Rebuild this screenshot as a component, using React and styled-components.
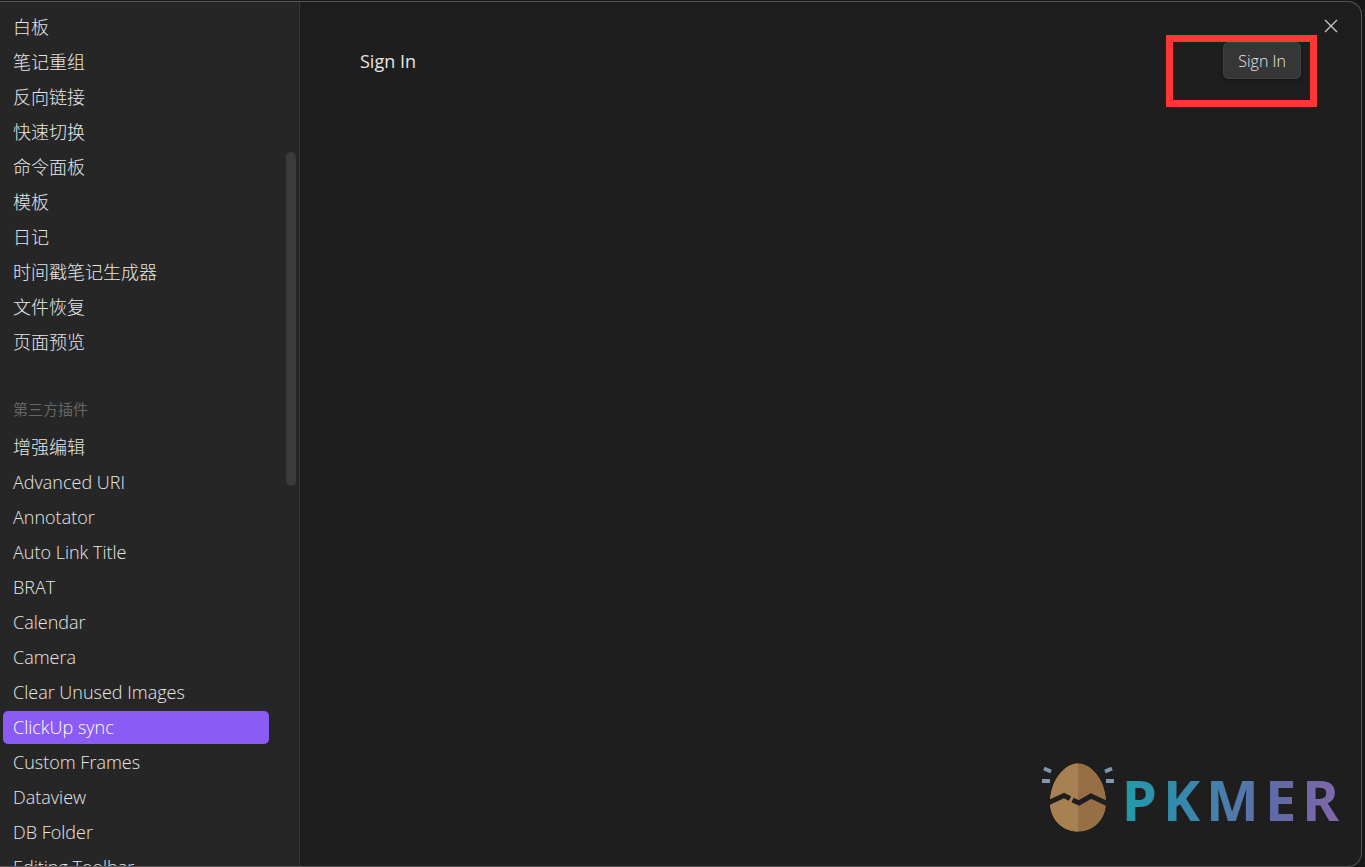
import React, { useState } from 'react';
import styled, { createGlobalStyle } from 'styled-components';

const corePlugins = [
  '白板',
  '笔记重组',
  '反向链接',
  '快速切换',
  '命令面板',
  '模板',
  '日记',
  '时间戳笔记生成器',
  '文件恢复',
  '页面预览',
];

const communityPlugins = [
  '增强编辑',
  'Advanced URI',
  'Annotator',
  'Auto Link Title',
  'BRAT',
  'Calendar',
  'Camera',
  'Clear Unused Images',
  'ClickUp sync',
  'Custom Frames',
  'Dataview',
  'DB Folder',
  'Editing Toolbar',
];

const App = () => {
  const [active, setActive] = useState('ClickUp sync');

  const renderItem = (name) => (
    <li key={name}>
      <NavItem type='button' $active={name === active} onClick={() => setActive(name)}>
        {name}
      </NavItem>
    </li>
  );

  return (
    <>
      <GlobalStyle />
      <Backdrop>
        <Modal>
          <Sidebar>
            <NavList>{corePlugins.map(renderItem)}</NavList>
            <GroupTitle>第三方插件</GroupTitle>
            <NavList>{communityPlugins.map(renderItem)}</NavList>
            <ScrollThumb />
          </Sidebar>

          <Content>
            <CloseButton type='button' aria-label='Close'>
              <svg width='14' height='14' viewBox='0 0 14 14'>
                <path d='M1 1L13 13M13 1L1 13' stroke='currentColor' strokeWidth='1.3' fill='none' />
              </svg>
            </CloseButton>
            <SettingRow>
              <SettingName>Sign In</SettingName>
              <SettingControl>
                <SignInButton type='button'>Sign In</SignInButton>
                <Highlight />
              </SettingControl>
            </SettingRow>
          </Content>

          <Watermark>
            <EggLogo />
            <Wordmark>
              <span>P</span>
              <span>K</span>
              <span>M</span>
              <span>E</span>
              <span>R</span>
            </Wordmark>
          </Watermark>
        </Modal>
      </Backdrop>
    </>
  );
};

const eggPath = 'M36 1C50 1 63 18 63.5 39C63.5 56 52 68 36 68C20 68 8.5 56 8.5 39C9 18 22 1 36 1Z';

const EggLogo = () => (
  <svg width='72' height='70' viewBox='0 0 72 70' aria-hidden='true'>
    <clipPath id='leftHalf'>
      <rect x='0' y='0' width='36' height='70' />
    </clipPath>
    <path d={eggPath} fill='#966f45' stroke='#a87a42' />
    <path d={eggPath} fill='#a88153' stroke='#ad8048' clipPath='url(#leftHalf)' />
    {/* crack */}
    <path d='M7 39.5L22 32.5L28 35.5' fill='none' stroke='#1e1e1e' strokeWidth='5' />
    <path d='M30.5 37L37 40L49 33L65 40.500' fill='none' stroke='#1e1e1e' strokeWidth='5' />
    <path d='M2 5.500L9 8.500M70 5.500L63 8.500M0 18H8M72 18H64' stroke='#7f98ae' strokeWidth='4' fill='none' />
  </svg>
);

export default App;

const GlobalStyle = createGlobalStyle`
  * {
    box-sizing: border-box;
  }

  body {
    margin: 0;
    background: #181818;
    color: #e6e6e6;
    font-family: 'Open Sans', 'Noto Sans CJK SC', sans-serif;
    font-weight: 300;
  }

  button {
    font: inherit;
    color: inherit;
    border: 0;
    cursor: pointer;
  }
`;

const Backdrop = styled.div`
  height: 100vh;
  padding: 1px 3px 0 0;
  overflow: hidden;
`;

const Modal = styled.div`
  position: relative;
  display: flex;
  height: 100%;
  overflow: hidden;
  background: #1e1e1e;
  border: 1px solid #555;
  border-left: 0;
  border-radius: 0 14px 14px 0;
`;

const Sidebar = styled.nav`
  position: relative;
  flex: 0 0 300px;
  padding: 9px 30px 0 3px;
  overflow: hidden;
  background: #262626;
  border-right: 1px solid #363636;
`;

const NavList = styled.ul`
  display: flex;
  flex-direction: column;
  gap: 2px;
  margin: 0;
  padding: 0;
  list-style: none;
`;

const NavItem = styled.button`
  display: block;
  width: 100%;
  height: 33px;
  padding: 0 10px;
  border-radius: 5px;
  background: ${(props) => (props.$active ? '#8a5cf5' : 'transparent')};
  color: ${(props) => (props.$active ? '#fff' : '#e6e6e6')};
  font-size: 18px;
  line-height: 33px;
  text-align: left;
  white-space: nowrap;
`;

const GroupTitle = styled.div`
  padding: 39px 10px 11px;
  color: #666;
  font-size: 15px;
  font-weight: 400;
  line-height: 22px;
`;

const ScrollThumb = styled.div`
  position: absolute;
  top: 150px;
  right: 3px;
  width: 10px;
  height: 334px;
  border-radius: 5px;
  background: #3b3b3b;
`;

const Content = styled.main`
  position: relative;
  flex: 1;
  padding: 40px 60px;
`;

const CloseButton = styled.button`
  position: absolute;
  top: 12px;
  right: 18px;
  display: flex;
  align-items: center;
  justify-content: center;
  width: 24px;
  height: 24px;
  padding: 0;
  background: transparent;
  color: #c8c8c8;
`;

const SettingRow = styled.div`
  display: flex;
  align-items: center;
  justify-content: space-between;
`;

const SettingName = styled.div`
  font-size: 18px;
  font-weight: 400;
  line-height: 24px;
`;

const SettingControl = styled.div`
  position: relative;
`;

const SignInButton = styled.button`
  display: block;
  height: 37px;
  padding: 0 15px;
  border-radius: 6px;
  background: #363636;
  box-shadow: inset 0 0 0 1px #404040, 0 2px 4px rgba(0, 0, 0, 0.3);
  font-size: 16px;
`;

const Highlight = styled.div`
  position: absolute;
  top: -7px;
  right: -16px;
  width: 151px;
  height: 72px;
  border: 7px solid #ff3636;
  pointer-events: none;
`;

const Watermark = styled.div`
  position: absolute;
  right: 22px;
  bottom: 33px;
  display: flex;
  align-items: center;
  gap: 8px;
  pointer-events: none;
`;

const Wordmark = styled.div`
  display: flex;
  gap: 6px;
  padding-top: 2px;
  background: linear-gradient(100deg, #2797ab 8%, #3a86ad 34%, #5577ab 55%, #6269a6 72%, #8068aa 96%);
  background-clip: text;
  color: transparent;
  font-family: 'Noto Sans', sans-serif;
  font-size: 56px;
  font-weight: 700;
  line-height: 68px;
`;
